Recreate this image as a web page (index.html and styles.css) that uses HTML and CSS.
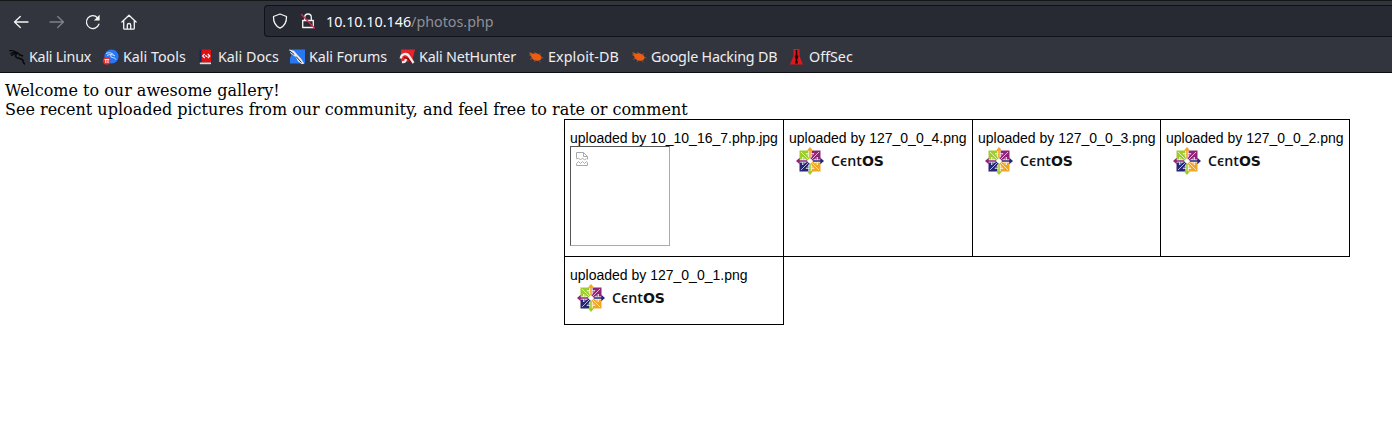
FILE: index.html
```html
<!DOCTYPE html>
<html lang="en">
<head>
<meta charset="utf-8">
<title>Gallery</title>
<link rel="stylesheet" href="styles.css">
</head>
<body>
<svg class="defs" width="0" height="0">
  <symbol id="centos" viewBox="0 0 28 28">
    <path fill="#9ccd2a" d="M3.500 3.500h10v10h-10z"/><path fill="#932279" d="M14.500 3.500h10v10h-10z"/>
    <path fill="#262577" d="M3.500 14.500h10v10h-10z"/><path fill="#efa724" d="M14.500 14.500h10v10h-10z"/>
    <path fill="none" stroke="#fff" stroke-opacity=".85" stroke-width=".8" d="M5 5l18 18M23 5 5 23M6.500 10v3.500M10 6.500h3.500M21.500 10v3.500M18 6.500h-3.500M6.500 18v-3.500M10 21.500h3.500M21.500 18v-3.500M18 21.500h-3.500M6.500 10l3.500 3.500M10 6.500l3.500 3.500M21.500 10 18 13.500M18 6.500 14.500 10M6.500 18l3.500-3.500M10 21.500l3.500-3.500M21.500 18 18 14.500M18 21.500 14.500 18"/>
    <path fill="#fff" d="M12.400 3.500h3.200v7h-3.200zM12.400 17.500h3.200v7h-3.200zM3.500 12.400h7v3.200h-7zM17.500 12.400h7v3.200h-7zM14 11.500l2.500 2.500-2.500 2.500-2.500-2.500z"/>
    <path fill="#efa724" d="m14 0 3.200 3.700h-2.400V11h-1.600V3.700h-2.400z"/>
    <path fill="#262577" d="m28 14-3.700 3.200v-2.400H17v-1.600h7.300v-2.400z"/>
    <path fill="#9ccd2a" d="m14 28-3.200-3.700h2.400V17h1.600v7.300h2.400z"/>
    <path fill="#932279" d="m0 14 3.700-3.200v2.400H11v1.600H3.700v2.400z"/>
  </symbol>
  <symbol id="dragon" viewBox="0 0 16 16">
    <path fill="none" stroke="currentColor" stroke-width="1.300" stroke-linecap="round" d="M.7 1.700c3-.4 5 .2 7 1.800M1.500 4.700c2.500-1.500 4.500-1.500 7-.4M2.500 6.300 6 4.700"/>
    <path fill="none" stroke="currentColor" stroke-width="1.700" stroke-linecap="round" d="M7 3.500c2 .3 3.300 1.300 4 2.500l2.500.7M8 4c-2 2.300-1.700 4 .2 4.800 2 .7 4.200.5 5.300 2 .8 1.200.7 2.700 1.800 4"/>
  </symbol>
  <symbol id="bug" viewBox="0 0 16 16">
    <path fill="#ec5d11" d="M1.500 3.300 5 4.700c1.800-1 5-.6 7 1.300 1.300 1 1.800 2 1.500 3-.3 1.800-1.800 2.700-3.800 2.700C6.500 12 3.700 10 3 7z"/>
    <path stroke="#b95a2b" stroke-width=".7" fill="none" d="m3.500 7-2.600-1.500M4.500 9.500l-2.500.8M7.500 11 6 13M11 11.500l1.500 1.800M13 8.500l2.500.4M11.500 6l1.200-2M8 5 6.500 3M4 5 1.500 3.600"/>
  </symbol>
</svg>

<header class="chrome">
  <div class="nav">
    <div class="buttons">
      <svg class="ico" viewBox="0 0 16 16"><path d="M15 8H1.500M7.300 2.500 1.500 8l5.800 5.500"/></svg>
      <svg class="ico dim" viewBox="0 0 16 16"><path d="M1 8h13.500M8.700 2.500 14.500 8l-5.800 5.500"/></svg>
      <svg class="ico" viewBox="0 0 16 16"><path d="M13.900 10.200A6.400 6.400 0 1 1 12.500 3.700"/><path class="solid" d="M14.600.8v5.700H8.900z"/></svg>
      <svg class="ico" viewBox="0 0 16 16"><path d="M.9 8 8 1.300 15.100 8M2.700 6.800v7.400q0 1 1 1h8.600q1 0 1-1V6.800M6.300 15v-4q0-1.500 1.700-1.500T9.700 11v4"/></svg>
    </div>
    <div class="urlbar">
      <svg class="ico" viewBox="0 0 16 16"><path d="M8 1 1.500 3.500C1.300 9 3.500 13 8 15.200 12.500 13 14.700 9 14.500 3.500z"/></svg>
      <svg class="ico lock" viewBox="0 0 16 16"><path d="M4.700 7V4.300a3.300 3.300 0 0 1 6.600 0V7M2.700 7.500h10.600v7H2.700z"/><path class="slash" d="m1.500 1.500 13 13.500"/></svg>
      <div class="url"><span class="host">10.10.10.146</span>/photos.php</div>
    </div>
  </div>
  <nav class="bookmarks">
    <a class="bm linux"><svg class="fav"><use href="#dragon"/></svg>Kali Linux</a>
    <a class="bm tools"><svg class="fav" viewBox="0 0 16 16"><circle cx="8.500" cy="7.500" r="7.100" fill="#2777f3"/><path d="M3 4.500c3-1.500 6-.5 7.500 1M4 6.500c3-1.500 5-1 8 .3M8 5.500c-1 2.500.5 3 2.500 3.200 1.500.2 2 1 2.500 2" fill="none" stroke="#cfe0ff"/><circle cx="3.700" cy="11.900" r="3.700" fill="#e92b2b"/><path d="M1.600 10.500h4.600M2.800 10.500V14M5 10.500V14" stroke="#fff" fill="none"/></svg>Kali Tools</a>
    <a class="bm docs"><svg class="fav" viewBox="0 0 16 16"><path fill="#10285c" d="M1.500.5h2.500v13H1.500z"/><path fill="#dd1016" d="M3.500.5H13v13H3.500z"/><path fill="#ddd" d="M1.800 13.500H13v1.700H1.800z"/><path d="M6.500 5 4.700 7l2 2M9.800 5l2 2-2 2M7.300 6.500l2 1.300" fill="none" stroke="#fff" stroke-width="1.200"/></svg>Kali Docs</a>
    <a class="bm forums"><svg class="fav" viewBox="0 0 16 16"><path fill="#2878f2" d="M1 .5h15v14H1z"/><path fill="#33353e" d="M0 3.500 2.500 6 1 9H0z"/><path d="m0 .5 5 1.300 4 4.700 3 3 3.200 5-2.200.8-4-3-2.200-4L2 4.500z" fill="#eee"/><path d="m.8 2 4.500 3.600M7 7.500l5.500 6" stroke="#272a32" fill="none"/></svg>Kali Forums</a>
    <a class="bm hunter"><svg class="fav" viewBox="0 0 16 16"><path fill="#e7242c" d="M2 .5h14L13 12.500H2z"/><path d="M1.800 9.500C2 4.500 8 3.500 10.200 7.500l4.300 6.500M3 13c3 .5 4.500-1.500 3.500-3.500" stroke="#eee" stroke-width="2.300" fill="none"/><path d="m5 8.500 4 1 3 4.500" stroke="#7e151a" stroke-width="1.400" fill="none"/></svg>Kali NetHunter</a>
    <a class="bm exploit"><svg class="fav"><use href="#bug"/></svg>Exploit-DB</a>
    <a class="bm hacking"><svg class="fav"><use href="#bug"/></svg>Google Hacking DB</a>
    <a class="bm offsec"><svg class="fav" viewBox="0 0 16 16"><path fill="#e2171c" d="M4.500 0h6v7l3.500 8.500H1L4.500 7z"/><path fill="#25070a" d="M6.700 1h1.600v4.500l1 2-1 3.500.7 3.500H6l.7-3.500-1-3.500 1-2z"/></svg>OffSec</a>
  </nav>
</header>

<main class="page">
  <div>Welcome to our awesome gallery!</div>
  <div>See recent uploaded pictures from our community, and feel free to rate or comment</div>
  <table class="gallery">
    <colgroup><col class="first"><col class="second"><col class="third"><col class="fourth"></colgroup>
    <tr class="tall">
      <td>uploaded by 10_10_16_7.php.jpg
        <div class="broken"><svg width="12" height="14" viewBox="0 0 12 14"><path d="M.5 6.500v-6h7l4 4v3M7.500.5v4h4M.5 7l2-1 2 2 2-2 2 2 2-1.500M.5 13.500v-2l2-2 2 2 2-2 2 2 2-2 1 1.500v2.500z"/></svg></div>
      </td>
      <td>uploaded by 127_0_0_4.png<div class="logo"><svg><use href="#centos"/></svg><svg class="word" viewBox="0 0 53 14"><text x="0" y="12" textLength="53" lengthAdjust="spacingAndGlyphs">C<tspan class="eps">є</tspan>nt<tspan class="wide">OS</tspan></text></svg></div></td>
      <td>uploaded by 127_0_0_3.png<div class="logo"><svg><use href="#centos"/></svg><svg class="word" viewBox="0 0 53 14"><text x="0" y="12" textLength="53" lengthAdjust="spacingAndGlyphs">C<tspan class="eps">є</tspan>nt<tspan class="wide">OS</tspan></text></svg></div></td>
      <td>uploaded by 127_0_0_2.png<div class="logo"><svg><use href="#centos"/></svg><svg class="word" viewBox="0 0 53 14"><text x="0" y="12" textLength="53" lengthAdjust="spacingAndGlyphs">C<tspan class="eps">є</tspan>nt<tspan class="wide">OS</tspan></text></svg></div></td>
    </tr>
    <tr class="short">
      <td>uploaded by 127_0_0_1.png<div class="logo"><svg><use href="#centos"/></svg><svg class="word" viewBox="0 0 53 14"><text x="0" y="12" textLength="53" lengthAdjust="spacingAndGlyphs">C<tspan class="eps">є</tspan>nt<tspan class="wide">OS</tspan></text></svg></div></td>
    </tr>
  </table>
</main>
</body>
</html>
```
FILE: styles.css
```css
* { box-sizing: border-box; }
body { margin: 0; background: #fff; overflow: hidden; }
.defs { position: absolute; }
.chrome {
  height: 73px;
  background: #33353e;
  border-top: 1px solid #14161a;
  border-bottom: 1px solid #0c0d11;
  color: #eeeef0;
  font: 14.3px "Noto Sans", sans-serif;
  white-space: nowrap;
}
.nav { display: flex; height: 41px; padding-top: 4px; }
.buttons { display: flex; align-items: center; gap: 20px; width: 264px; height: 33px; padding-left: 13px; }
.ico { width: 16px; height: 16px; flex: none; fill: none; stroke: #f5f5f6; stroke-width: 1.3; stroke-linecap: round; stroke-linejoin: round; }
.ico .solid { fill: #f5f5f6; stroke: none; }
.ico .slash { stroke: #e22850; }
.dim { opacity: .4; }
.urlbar {
  flex: 1;
  display: flex;
  align-items: center;
  height: 32px;
  padding-left: 7px;
  background: #272933;
  border: 1px solid #111218;
  border-right: 0;
  border-radius: 4px 0 0 4px;
}
.lock { margin-left: 12px; }
.url { margin-left: 10px; color: #8f9097; }
.host { color: #fbfbfe; }
.bookmarks { display: flex; height: 29px; padding-left: 9px; }
.bm { display: flex; align-items: center; gap: 4px; flex: none; }
.fav { width: 16px; height: 16px; flex: none; }
.linux { width: 94px; letter-spacing: -.23px; }
.linux .fav { color: #090a0c; }
.tools { width: 95px; }
.docs { width: 91px; }
.forums { width: 110px; letter-spacing: -.08px; }
.hunter { width: 129px; letter-spacing: -.18px; }
.exploit { width: 103px; letter-spacing: .1px; }
.hacking { width: 158px; letter-spacing: -.21px; }
.page { padding: 8px 0 0 5px; font: 16px/19px "DejaVu Serif", serif; color: #000; }
.gallery {
  table-layout: fixed;
  width: 786px;
  margin-left: 559px;
  border-collapse: collapse;
  font: 14px/16px "Liberation Sans", Arial, sans-serif;
  white-space: nowrap;
}
.first { width: 219px; }
.second, .fourth { width: 189px; }
.third { width: 188px; }
.tall { height: 137px; }
.short { height: 68px; }
.gallery td { border: 1px solid #000; padding: 10px 5px 0; vertical-align: top; }
.broken { width: 100px; height: 100px; padding: 5px; border: 1px solid; border-color: #555 #aaa #aaa #555; }
.broken svg { display: block; fill: none; stroke: #aaa; }
.logo { display: flex; align-items: center; gap: 7px; height: 30px; padding-left: 7px; }
.logo svg { width: 28px; height: 28px; }
.logo .word { width: 53px; height: 14px; overflow: visible; }
.word text { font: 600 13.5px "Open Sans", "DejaVu Sans", sans-serif; fill: #111; }
.word .wide { font: bold 13.3px "DejaVu Sans", sans-serif; }
```
